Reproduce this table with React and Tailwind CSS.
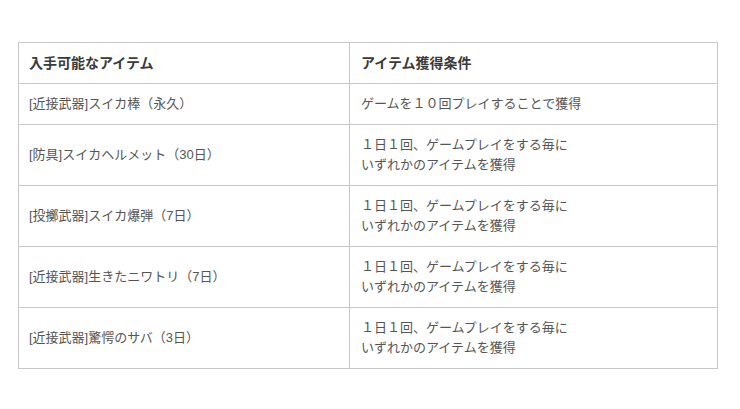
import React from 'react';

const rows = [
  { item: '[近接武器]スイカ棒（永久）', cond: ['ゲームを１０回プレイすることで獲得'] },
  { item: '[防具]スイカヘルメット（30日）', cond: ['１日１回、ゲームプレイをする毎に', 'いずれかのアイテムを獲得'] },
  { item: '[投擲武器]スイカ爆弾（7日）', cond: ['１日１回、ゲームプレイをする毎に', 'いずれかのアイテムを獲得'] },
  { item: '[近接武器]生きたニワトリ（7日）', cond: ['１日１回、ゲームプレイをする毎に', 'いずれかのアイテムを獲得'] },
  { item: '[近接武器]驚愕のサバ（3日）', cond: ['１日１回、ゲームプレイをする毎に', 'いずれかのアイテムを獲得'] },
];

const App = () => {
  return (
    <div
      className="min-h-screen bg-white pt-[42px] pl-[18px]"
      style={{ fontFamily: '"Liberation Sans", "Noto Sans CJK JP", sans-serif' }}
    >
      <table className="w-[700px] border-collapse border border-[#c6c6c6] text-[13px] leading-[20px] text-[#555]">
        <colgroup>
          <col className="w-[331px]" />
          <col />
        </colgroup>
        <thead>
          <tr>
            <th className="border border-[#c6c6c6] px-[10px] py-[10px] text-left text-[14px] font-semibold text-[#3a3a3a]">
              入手可能なアイテム
            </th>
            <th className="border border-[#c6c6c6] px-[11px] py-[10px] text-left text-[14px] font-semibold text-[#3a3a3a]">
              アイテム獲得条件
            </th>
          </tr>
        </thead>
        <tbody>
          {rows.map((row, i) => (
            <tr key={i}>
              <td className="border border-[#c6c6c6] px-[10px] py-[10px] align-middle">{row.item}</td>
              <td className="border border-[#c6c6c6] px-[11px] py-[10px] align-middle">
                {row.cond.map((line, j) => (
                  <div key={j}>{line}</div>
                ))}
              </td>
            </tr>
          ))}
        </tbody>
      </table>
    </div>
  );
};

export default App;
